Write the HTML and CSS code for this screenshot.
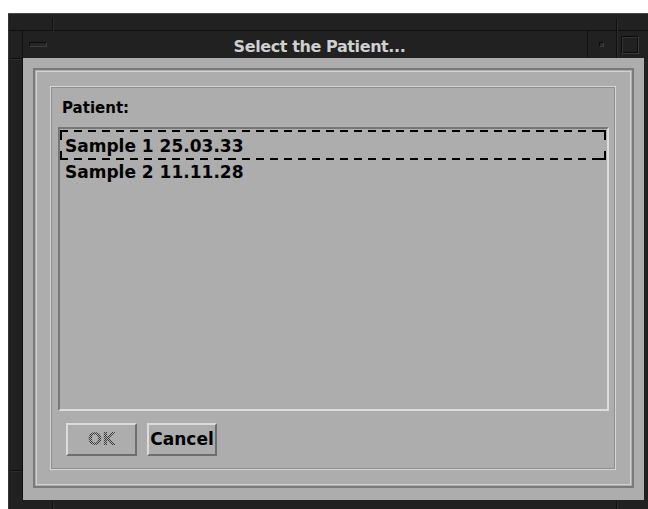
FILE: index.html
```html
<!DOCTYPE html>
<html lang="en">
<head>
<meta charset="utf-8">
<title>Select the Patient...</title>
<link rel="stylesheet" href="styles.css">
</head>
<body>
<div class="window">
  <!-- resize-handle separators of the window frame -->
  <span class="seam seam-top"></span>
  <span class="seam seam-tl"></span>
  <span class="seam seam-tr"></span>
  <span class="seam seam-lt"></span>
  <span class="seam seam-lb"></span>
  <span class="seam seam-bl"></span>
  <span class="seam seam-br"></span>
  <span class="seam seam-edge"></span>

  <div class="titlebar">
    <div class="tb-btn tb-menu"><span class="menu-bar"></span></div>
    <div class="title">Select the Patient...</div>
    <div class="tb-btn tb-min"><span class="min-box"></span></div>
    <div class="tb-btn tb-max"><span class="max-box"></span></div>
  </div>

  <div class="client">
    <div class="group">
      <div class="panel">
        <div class="label">Patient:</div>
        <div class="list">
          <div class="item focus">Sample 1 25.03.33</div>
          <div class="item">Sample 2 11.11.28</div>
        </div>
        <div class="actions">
          <button class="btn btn-disabled" disabled>OK</button>
          <button class="btn">Cancel</button>
        </div>
      </div>
    </div>
  </div>
</div>
</body>
</html>
```

FILE: styles.css
```css
html, body {
  margin: 0;
  padding: 0;
  background: #ffffff;
}

body {
  width: 648px;
  height: 509px;
  overflow: hidden;
  font-family: "DejaVu Sans", "Liberation Sans", sans-serif;
  font-weight: bold;
}

/* window manager frame */
.window {
  position: relative;
  box-sizing: border-box;
  margin: 13px 0 0 8px;
  width: 640px;
  height: 496px;
  padding: 18px 4px 9px 15px;
  background: #212121;
  box-shadow: inset 0 1px 0 #4a4a4a, inset 1px 0 0 #333333;
  display: flex;
  flex-direction: column;
}

.seam {
  position: absolute;
  background: #101010;
}
.seam-top  { left: 1px; right: 0; top: 17px; height: 1px; }
.seam-tl   { left: 44px; top: 5px; width: 1px; height: 13px; box-shadow: 1px 0 0 #2c2c2c; }
.seam-tr   { left: 608px; top: 5px; width: 1px; height: 40px; box-shadow: 1px 0 0 #2c2c2c; }
.seam-lt   { left: 2px; width: 13px; top: 45px; height: 1px; box-shadow: 0 1px 0 #2c2c2c; }
.seam-lb   { left: 2px; width: 13px; top: 457px; height: 1px; box-shadow: 0 1px 0 #2c2c2c; }
.seam-bl   { left: 44px; top: 488px; width: 1px; height: 8px; box-shadow: 1px 0 0 #2c2c2c; }
.seam-br   { left: 608px; top: 488px; width: 1px; height: 8px; box-shadow: 1px 0 0 #2c2c2c; }
.seam-edge { left: 14px; top: 18px; width: 1px; height: 470px; }

/* title bar */
.titlebar {
  height: 27px;
  display: flex;
  align-items: stretch;
}

.tb-btn {
  display: flex;
  align-items: center;
  justify-content: center;
}
.tb-menu { width: 29px; }
.tb-min  { width: 29px; box-shadow: inset 1px 0 0 #101010; }
.tb-max  { width: 28px; }

.menu-bar {
  box-sizing: border-box;
  width: 18px;
  height: 5px;
  border: 1px solid;
  border-color: #0b0b0b #3c3c3c #3c3c3c #0b0b0b;
  background: #262626;
}
.min-box {
  box-sizing: border-box;
  width: 5px;
  height: 5px;
  border: 1px solid;
  border-color: #0b0b0b #3c3c3c #3c3c3c #0b0b0b;
  background: #2a2a2a;
}
.max-box {
  box-sizing: border-box;
  width: 18px;
  height: 18px;
  border: 1px solid;
  border-color: #0b0b0b #3a3a3a #3a3a3a #0b0b0b;
  box-shadow: inset 1px 1px 0 #333333, inset -1px -1px 0 #0e0e0e;
}

.title {
  flex: 1;
  text-align: center;
  color: #d0d0d0;
  font-size: 16px;
  letter-spacing: -0.4px;
  line-height: 27px;
  padding-top: 2px;
  box-sizing: border-box;
  white-space: nowrap;
}

/* dialog client area */
.client {
  height: 442px;
  box-sizing: border-box;
  padding: 10px 10px 12px 10px;
  background: #adadad;
}

.group {
  box-sizing: border-box;
  height: 420px;
  padding: 16px 16px 16px 15px;
  border: 2px solid #7a7a7a;
  box-shadow: inset 0 0 0 1px #adadad, inset 0 0 0 2px #d2d2d2;
}

.panel {
  box-sizing: border-box;
  width: 566px;
  height: 384px;
  padding: 13px 6px 13px 7px;
  border: 1px solid #d6d6d6;
  box-shadow: inset 0 0 0 1px #8e8e8e;
  display: flex;
  flex-direction: column;
}

.label {
  height: 17px;
  line-height: 17px;
  font-size: 15px;
  color: #000;
  margin: 0 0 10px 4px;
}

.list {
  box-sizing: border-box;
  width: 551px;
  height: 284px;
  padding-top: 4px;
  border: 2px solid;
  border-color: #777777 #dcdcdc #dcdcdc #777777;
}

.item {
  position: relative;
  height: 26px;
  line-height: 26px;
  padding-left: 5px;
  font-size: 17px;
  color: #000;
  white-space: nowrap;
}

/* keyboard-focus outline around the current row */
.item.focus::before {
  content: "";
  position: absolute;
  top: -3px;
  bottom: -1px;
  left: 0;
  right: 1px;
  background:
    linear-gradient(#000, #000) right top / 8px 2px no-repeat,
    linear-gradient(#000, #000) right bottom / 8px 2px no-repeat,
    repeating-linear-gradient(90deg, #000 0 8px, transparent 8px 14px) left top / 100% 2px no-repeat,
    repeating-linear-gradient(90deg, #000 0 8px, transparent 8px 14px) left bottom / 100% 2px no-repeat,
    repeating-linear-gradient(180deg, #000 0 10px, transparent 10px 21px) left top / 2px 100% no-repeat,
    repeating-linear-gradient(180deg, #000 0 10px, transparent 10px 21px) right top / 2px 100% no-repeat;
}

.actions {
  display: flex;
  gap: 10px;
  margin: 12px 0 0 8px;
}

.btn {
  box-sizing: border-box;
  height: 33px;
  width: 70px;
  padding: 0;
  margin: 0;
  border: 2px solid;
  border-color: #dcdcdc #6e6e6e #6e6e6e #dcdcdc;
  background: #adadad;
  font-family: "DejaVu Sans", "Liberation Sans", sans-serif;
  font-weight: bold;
  font-size: 17px;
  line-height: 29px;
  color: #000;
  text-align: center;
}

.btn-disabled {
  width: 71px;
  color: transparent;
  background:
    repeating-conic-gradient(#3a3a3a 0 25%, transparent 0 50%) 0 0 / 2px 2px;
  -webkit-background-clip: text;
  background-clip: text;
  background-color: transparent;
}
```
